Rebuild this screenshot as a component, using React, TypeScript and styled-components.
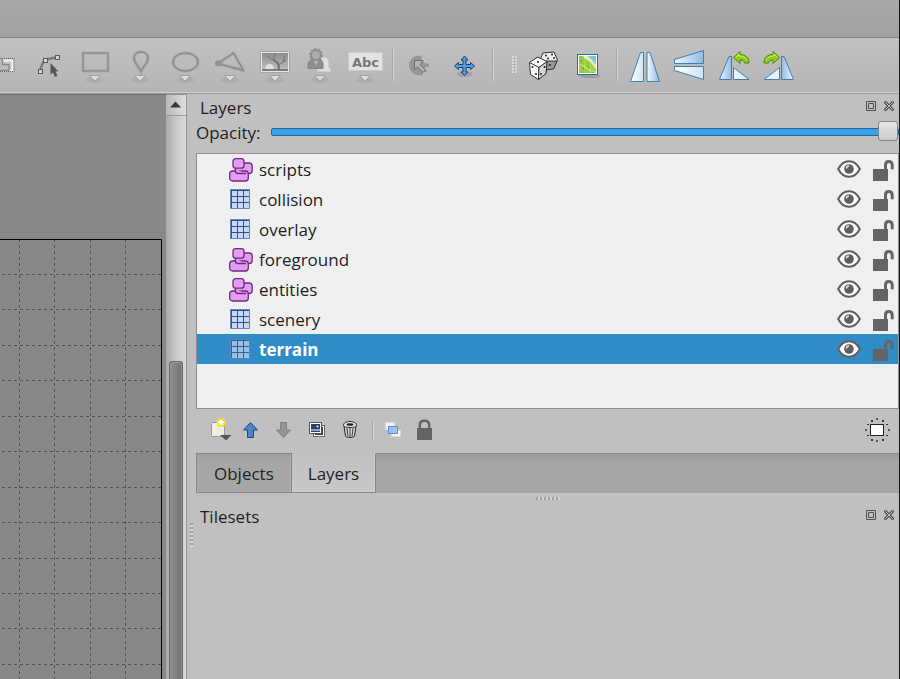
import React, { useState } from "react";
import styled, { createGlobalStyle, css } from "styled-components";

const GlobalStyle = createGlobalStyle`
  * { box-sizing: border-box; }
  body {
    margin: 0;
    background: #c0c0c0;
    color: #1e1e1e;
    font: 17px/24px "Open Sans", "Noto Sans", sans-serif;
  }
  button { font: inherit; color: inherit; }
`;

/* ---------- window frame ---------- */

const Window = styled.div`
  display: flex;
  flex-direction: column;
  height: 100vh;
  overflow: hidden;
  border-right: 1px solid #16181a;
`;

const MenuArea = styled.header`
  flex: none;
  height: 38px;
  background: linear-gradient(#a8a8a8, #a2a2a2);
  border-bottom: 1px solid #868686;
`;

const MainToolbar = styled.div`
  flex: none;
  display: flex;
  height: 56px;
  padding-bottom: 1px;
  background: linear-gradient(#c1c1c1, #b5b5b5);
  border-bottom: 1px solid #989898;
  box-shadow: inset 0 -1px #cfcfcf;
`;

const ToolButton = styled.button<{ $clipped?: boolean }>`
  flex: none;
  width: 45px;
  height: 54px;
  padding: 0;
  border: 0;
  background: none;
  margin-left: ${(p) => (p.$clipped ? "-18px" : "0")};
  svg { display: block; }
`;

const Separator = styled.span<{ $small?: boolean }>`
  flex: none;
  align-self: center;
  width: 10px;
  height: ${(p) => (p.$small ? "20px" : "32px")};
  background: linear-gradient(90deg, #a6a6a6 50%, #d6d6d6 50%) 5px 0 / 2px 100% no-repeat;
`;

const Workspace = styled.main`
  flex: 1;
  min-height: 0;
  display: flex;
`;

/* ---------- map canvas ---------- */

const MapCanvas = styled.section`
  flex: 166 1 0;
  min-width: 0;
  display: flex;
  justify-content: flex-end;
  overflow: hidden;
  background: #888;
  border-top: 1px solid #707070;
`;

const MapDrawing = styled.svg`
  flex: none;
  width: 166px;
`;

const ScrollBar = styled.div`
  flex: none;
  width: 21px;
  display: flex;
  flex-direction: column;
  border-top: 1px solid #8e8e8e;
  border-right: 1px solid #969696;
  background: linear-gradient(90deg, #a9a9a9, #c9c9c9 50%, #dadada);
`;

const ScrollArrow = styled.button`
  flex: none;
  height: 21px;
  padding: 0;
  border: 0;
  border-bottom: 1px solid #9a9a9a;
  background: linear-gradient(90deg, #b8b8b8, #dedede);
  svg { display: block; }
`;

const ScrollTrack = styled.div`
  flex: 1;
  display: flex;
  padding: 245px 3px 0;
`;

const ScrollThumb = styled.div`
  flex: 1;
  border: 1px solid #6c6c6c;
  border-bottom: 0;
  border-radius: 3px 3px 0 0;
  background: linear-gradient(90deg, #8e8e8e, #747474);
  box-shadow: inset 1px 1px #949494, inset -1px 0 #8c8c8c;
`;

/* ---------- docks ---------- */

const DockColumn = styled.aside`
  flex: 712 1 0;
  min-width: 0;
  display: flex;
  background: #c0c0c0;
`;

const SideSplitter = styled.div`
  flex: none;
  width: 9px;
  display: flex;
  align-items: flex-end;
  padding: 0 0 132px 3px;
`;

const SideGrip = styled.span`
  width: 3px;
  height: 24px;
  background: linear-gradient(#a0a0a0 50%, #d4d4d4 50%) 0 0 / 3px 4px;
`;

const Docks = styled.div`
  flex: 1;
  min-width: 0;
  display: flex;
  flex-direction: column;
`;

const TitleBar = styled.div<{ $spaced?: boolean }>`
  display: flex;
  align-items: center;
  justify-content: space-between;
  height: 24px;
  margin-top: ${(p) => (p.$spaced ? "4px" : "2px")};
  padding: 0 4px;
`;

const Title = styled.h2`
  margin: 0;
  font-size: 17px;
  font-weight: 400;
`;

const TitleButtons = styled.div`
  display: flex;
  gap: 6px;
  padding-bottom: 4px;
`;

const TitleButton = styled.button`
  width: 12px;
  height: 12px;
  padding: 0;
  border: 0;
  background: none;
  svg { display: block; }
`;

const OpacityRow = styled.div`
  display: flex;
  align-items: center;
  gap: 10px;
  height: 26px;
`;

const OpacitySlider = styled.input`
  appearance: none;
  flex: 1;
  min-width: 0;
  height: 20px;
  margin: 0 0 2px;
  background: none;
  &::-webkit-slider-runnable-track {
    height: 8px;
    border: 1px solid #21699f;
    border-radius: 2px;
    background: linear-gradient(#3d9ee2, #36a5f0);
  }
  &::-webkit-slider-thumb {
    appearance: none;
    width: 20px;
    height: 20px;
    margin-top: -8px;
    border: 1px solid #858585;
    border-radius: 3px;
    background: linear-gradient(#e6e6e6, #cacaca);
  }
`;

const LayerList = styled.ul`
  list-style: none;
  height: 256px;
  margin: 7px 0 0;
  padding: 0;
  border: 1px solid #8f8f8f;
  background: #efefef;
  overflow: hidden;
`;

const LayerRow = styled.li<{ $selected: boolean }>`
  display: flex;
  align-items: center;
  height: 30px;
  padding: 0 4px 0 32px;
  ${(p) =>
    p.$selected &&
    css`
      background: #308cc6;
      color: #fff;
      font-weight: 700;
    `}
`;

const LayerName = styled.button`
  flex: 1;
  display: flex;
  align-items: center;
  gap: 6px;
  height: 30px;
  padding: 2px 0 0;
  border: 0;
  background: none;
  text-align: left;
`;

const RowToggle = styled.button`
  flex: none;
  padding: 0;
  height: 30px;
  border: 0;
  background: none;
  margin-left: 8px;
  svg { display: block; }
`;

const LayerActions = styled.div`
  display: flex;
  height: 44px;
  padding: 0 6px;
`;

const ActionButton = styled.button`
  flex: none;
  width: 33px;
  height: 42px;
  padding: 0;
  border: 0;
  background: none;
  svg { display: block; }
`;

const Spacer = styled.span`
  flex: 1;
`;

const TabBar = styled.div`
  display: flex;
  height: 40px;
  background: linear-gradient(#8b8b8b 1px, #9a9a9a 1px, #a5a5a5 10px);
`;

const Tab = styled.button<{ $active: boolean }>`
  padding: 2px ${(p) => (p.$active ? "16px" : "17px")} 0;
  border: 1px solid #868686;
  border-left-width: ${(p) => (p.$active ? "0" : "1px")};
  border-top-color: ${(p) => (p.$active ? "#c0c0c0" : "#868686")};
  background: ${(p) => (p.$active ? "linear-gradient(#c0c0c0, #c8c8c8)" : "linear-gradient(#9f9f9f, #a6a6a6 10px)")};
  box-shadow: inset -1px -1px ${(p) => (p.$active ? "#d0d0d0" : "#adadad")};
`;

const Splitter = styled.div`
  display: flex;
  justify-content: center;
  height: 8px;
  padding-top: 4px;
`;

const SplitterGrip = styled.span`
  width: 24px;
  height: 3px;
  background: linear-gradient(90deg, #a0a0a0 50%, #d4d4d4 50%) 0 0 / 4px 3px;
`;

const ToolbarGrip = styled.span`
  flex: none;
  align-self: center;
  width: 24px;
  height: 18px;
  background: radial-gradient(circle at 1px 1px, #dadada 1px, #a8a8a8 2px) 15px 0 / 3px 3px;
  background-clip: content-box;
  padding: 0 4px 0 15px;
`;

/* ---------- drawings ---------- */

const Tool = ({ label, clipped, menu, children }: { label: string; clipped?: boolean; menu?: boolean; children: React.ReactNode }) => (
  <ToolButton type="button" aria-label={label} $clipped={clipped}>
    <svg width="45" height="54" viewBox="0 0 45 54" fill="none">
      {children}
      {menu && (
        <>
          <ellipse cx="23" cy="42" rx="9" ry="3" fill="#888" opacity=".25" />
          <path d="M17.5 37.5h11L23 43z" fill="#dcdcdc" stroke="#a2a2a2" />
        </>
      )}
    </svg>
  </ToolButton>
);

const Action = ({ label, children }: { label: string; children: React.ReactNode }) => (
  <ActionButton type="button" aria-label={label}>
    <svg width="33" height="42" viewBox="0 0 33 42" fill="none">
      {children}
    </svg>
  </ActionButton>
);

const BlueGradient = () => (
  <defs>
    <linearGradient id="paleLeft" x1="0" x2="1">
      <stop offset="0" stopColor="#fff" />
      <stop offset="1" stopColor="#cfe4f3" />
    </linearGradient>
    <linearGradient id="paleRight" x1="0" x2="1">
      <stop offset="0" stopColor="#f2f8fc" />
      <stop offset="1" stopColor="#8dbbe2" />
    </linearGradient>
  </defs>
);

const RotateDrawing = () => (
  <>
    <path d="M8.5 41.500 18 18.500h2.500v23z" fill="url(#paleRight)" stroke="#3f7eb5" />
    <path d="M22.500 29.500 38 41.500H22.500z" fill="#e6f1f9" stroke="#3f7eb5" />
    <path
      d="M22.500 19.500 29 13.500v3c5.500 0 9 3 9 8.500h-4.500c-.3-2-1.600-3-4.500-3v3.500z"
      fill="#8fcc1c"
      stroke="#4c8a09"
    />
    <path d="M24.500 19.500 28 16v2c4 .2 6.500 1.500 8 4" stroke="#c9f06a" />
  </>
);

const TileLayerIcon = ({ faded }: { faded: boolean }) => (
  <svg width="24" height="24" viewBox="0 0 24 24" opacity={faded ? 0.7 : 1}>
    <rect x="2" y="2" width="19" height="19" fill="#32508c" />
    <rect x="1.500" y="1.500" width="19" height="19" fill="none" stroke="#6f86b4" />
    {[3, 9, 15].map((y) => [3, 9, 15].map((x) => <rect key={`${x}-${y}`} x={x} y={y} width="5" height="5" fill="#c4d7f8" />))}
  </svg>
);

const ObjectLayerIcon = () => (
  <svg width="24" height="24" viewBox="0 0 24 24" fill="#e49df3" stroke="#6d2a80" strokeWidth="1.300">
    <rect x="6.500" y="5" width="16.700" height="10.500" rx="3" />
    <rect x=".7" y="13" width="18.600" height="10" rx="3" />
    <path d="M6.500 11v2.500c0 1.500 1 2 3 2H17" fill="#e49df3" />
    <rect x="4" y=".7" width="11" height="9.500" rx="2.800" />
  </svg>
);

const EyeIcon = () => (
  <svg width="24" height="30" viewBox="0 0 24 30">
    <path d="M1.200 15C4 9.500 8 7.200 12 7.200S20 9.500 22.800 15C20 20.500 16 22.800 12 22.800S4 20.500 1.200 15z" fill="#fafafa" stroke="#5e5e5e" strokeWidth="2" />
    <circle cx="12" cy="15" r="4.800" fill="#5e5e5e" />
    <path d="M9.500 14.500a2.500 2.500 0 0 1 2.500-2.500" fill="none" stroke="#e8e8e8" strokeWidth="1.300" />
  </svg>
);

const UnlockedIcon = () => (
  <svg width="25" height="30" viewBox="0 0 25 30">
    <path d="M4 15h15v12H4z" fill="#646464" />
    <path d="M16.500 16v-5c0-2.700 1-3.500 3.200-3.500s3.500 1.200 3.500 3.800v4" fill="none" stroke="#646464" strokeWidth="3" />
  </svg>
);

const DockButtons = ({ name }: { name: string }) => (
  <TitleButtons>
    <TitleButton type="button" aria-label={`Float ${name}`}>
      <svg width="12" height="12" fill="none" stroke="#505050">
        <path d="M1.500 1.500h9v9h-9zM3.500 3.500h5v5h-5z" />
      </svg>
    </TitleButton>
    <TitleButton type="button" aria-label={`Close ${name}`}>
      <svg width="12" height="12" fill="none" strokeLinecap="round">
        <path d="M2.500 2.500l7 7m0-7l-7 7" stroke="#505050" strokeWidth="3" />
        <path d="M2.500 2.500l7 7m0-7l-7 7" stroke="#c0c0c0" strokeWidth="1" />
      </svg>
    </TitleButton>
  </TitleButtons>
);

const TILE = 35.45;
const MAP_TOP = 144;
const MAP_RIGHT = 161;

const MapGrid = () => (
  <MapDrawing aria-label="Map">
    <g stroke="#535353" strokeDasharray="3 3">
      {[1, 2, 3, 4].map((i) => {
        const x = Math.floor(MAP_RIGHT - i * TILE) + 0.5;
        return <line key={i} x1={x} x2={x} y1={MAP_TOP} y2="3000" />;
      })}
      {Array.from({ length: 60 }, (_, i) => {
        const y = Math.floor(MAP_TOP + (i + 1) * TILE) + 0.5;
        return <line key={i} x1="-4" x2={MAP_RIGHT} y1={y} y2={y} />;
      })}
    </g>
    <path d={`M0 ${MAP_TOP + 0.5}h${MAP_RIGHT + 0.5}V3000`} fill="none" stroke="#000" />
  </MapDrawing>
);

/* ---------- data ---------- */

type Layer = { name: string; kind: "object" | "tile" };

const layers: Layer[] = [
  { name: "scripts", kind: "object" },
  { name: "collision", kind: "tile" },
  { name: "overlay", kind: "tile" },
  { name: "foreground", kind: "object" },
  { name: "entities", kind: "object" },
  { name: "scenery", kind: "tile" },
  { name: "terrain", kind: "tile" },
];

const Toolbar = () => (
  <MainToolbar role="toolbar" aria-label="Tools">
    <Tool label="Select objects" clipped>
      <rect x="4" y="21" width="28" height="13" fill="#c8c8c8" />
      <rect x="4" y="22.500" width="26.500" height="10" stroke="#f4f4f4" strokeWidth="2" />
      <rect x="4" y="20.500" width="28" height="13" stroke="#555" strokeDasharray="1 1" />
      <path d="M10 20.500h10.500v6H27v6H10zM10 28h7v-2" fill="#bdbdbd" stroke="#8b8b8b" strokeWidth="1.500" strokeLinejoin="round" />
    </Tool>
    <Tool label="Edit polygons">
      <path d="M13.500 33c.8-6 2-9 5-11 3-1.500 7-1.500 12-3" stroke="#8d8d8d" strokeWidth="3" />
      <path d="M13.500 33c.8-6 2-9 5-11 3-1.500 7-1.500 12-3" stroke="#6c6c6c" />
      <g fill="#d6d6d6" stroke="#595959">
        <rect x="11.500" y="31.500" width="4" height="4" />
        <rect x="16.500" y="20.500" width="4" height="4" />
        <rect x="28.500" y="17.500" width="4" height="4" />
      </g>
      <path d="M23.500 25v11.500l2.500-2 2 4.500 2.500-1.200-2-4.300h3z" fill="#555" />
    </Tool>
    <Tool label="Insert rectangle" menu>
      <rect x="11" y="15" width="25" height="18" stroke="#a8a8a8" strokeWidth="3" />
      <rect x="11" y="15" width="25" height="18" stroke="#858585" />
    </Tool>
    <Tool label="Insert point" menu>
      <path d="M24 33.500c-1.500-4-7-8.500-7-13.500 0-4 3-6 7-6s7 2 7 6c0 5-5.500 9.500-7 13.500z" stroke="#a2a2a2" strokeWidth="3" />
      <path d="M24 33.500c-1.500-4-7-8.500-7-13.500 0-4 3-6 7-6s7 2 7 6c0 5-5.500 9.500-7 13.500z" stroke="#858585" />
    </Tool>
    <Tool label="Insert ellipse" menu>
      <ellipse cx="23.500" cy="24" rx="12.500" ry="9" stroke="#a4a4a4" strokeWidth="3" />
      <ellipse cx="23.500" cy="24" rx="12.500" ry="9" stroke="#838383" />
    </Tool>
    <Tool label="Insert polygon" menu>
      <path d="M11 25.500 26.500 15 36.500 32.500z" stroke="#a4a4a4" strokeWidth="3" strokeLinejoin="round" />
      <path d="M11 25.500 26.500 15 36.500 32.500z" stroke="#838383" strokeLinejoin="round" />
      <circle cx="11" cy="25.500" r="3" fill="#929292" />
    </Tool>
    <Tool label="Insert tile" menu>
      <defs>
        <linearGradient id="sky" x1="0" x2="0" y1="0" y2="1">
          <stop offset="0" stopColor="#8c8c8c" />
          <stop offset="1" stopColor="#c2c2c2" />
        </linearGradient>
      </defs>
      <rect x="8.500" y="13.500" width="29" height="21" rx="1" fill="#e6e6e6" stroke="#a4a4a4" />
      <rect x="10" y="15" width="26" height="18" fill="url(#sky)" />
      <circle cx="17.500" cy="30" r="4" fill="#e0e0e0" />
      <path d="M10 31h26v2H10z" fill="#7b7b7b" />
      <path d="M27 31.500c-.6-3 0-5-1.300-6.500l-4.400-3.500" stroke="#6a6a6a" strokeWidth="2" />
      <path d="m15.500 17.500 2.500 3 3.500 1 4 3.500M21.500 21l1.500-5M26.500 27l4.500-3 2-6M31 23.500l3-1" stroke="#707070" />
    </Tool>
    <Tool label="Insert template" menu>
      <path d="M23 21.500c2-3 7-2 8 0l.5 7 2.500 5H20z" fill="#e0e0e0" stroke="#cfcfcf" />
      <path d="M11 30.500V25l3-3.500h10l2 3.500v5.500z" fill="#8e8e8e" stroke="#858585" />
      <circle cx="19" cy="17" r="5" fill="#acacac" stroke="#8d8d8d" strokeWidth="2" />
      <circle cx="19" cy="17" r="6.500" stroke="#8d8d8d" strokeDasharray="2 2" />
      <path d="m17 23 2 5 2-5" fill="#b6b6b6" />
    </Tool>
    <Tool label="Insert text" menu>
      <rect x="6.500" y="14.500" width="34" height="18" rx="1" fill="#e3e3e3" stroke="#c9c9c9" />
      <text x="23.500" y="29" textAnchor="middle" fontFamily="DejaVu Sans" fontWeight="700" fontSize="13" fill="#777">
        Abc
      </text>
    </Tool>
    <Separator />
    <Tool label="World tool">
      <circle cx="22" cy="27.500" r="10" fill="#969696" />
      <path d="M24 18c4 1 7 4 8 8l-4-1-3-3zM28 29h4l-1 4-3-1zM26 34l4 0-4 3z" fill="#c0c0c0" />
      <path d="M17.500 22.500v9l3-2.500 5.500 5.500 2.500-2.500-5.500-5.500 3-4z" fill="#b4b4b4" stroke="#707070" />
    </Tool>
    <Tool label="Layer offset">
      <ellipse cx="22.500" cy="36" rx="8" ry="3" fill="#777" opacity=".35" />
      <path
        d="m22.500 18 3.500 4h-2v4.500h4.500v-2l4 3.500-4 3.500v-2H24V34h2l-3.500 3.500L19 34h2v-4.500h-4.500v2l-4-3.500 4-3.500v2H21V22h-2z"
        fill="#5f9be0"
        stroke="#173f7d"
      />
    </Tool>
    <Separator />
    <ToolbarGrip />
    <Tool label="Random mode">
      <g stroke="#303030" strokeLinejoin="round">
        <path d="m22 15 11-1 3.500 8-4 8-11 1-3-8z" fill="#f0f0f0" />
        <path d="M25 23h11l-3.500 8-9 1z" fill="#9a9a9a" />
        <path d="m8.500 24.500 8-5.500 9.500 4.500-1 12-7.500 6-8-5z" fill="#fff" />
        <path d="m8.500 24.500 9.500 5 8-6M18 29.500l-.5 12" />
        <path d="m18 29.500 8-6-1 12-7.500 6z" fill="#d8d8d8" />
      </g>
      <g fill="#222">
        <circle cx="17" cy="24" r="1" />
        <circle cx="11.500" cy="29" r="1" />
        <circle cx="15" cy="36" r="1" />
        <circle cx="20" cy="36" r="1" />
        <circle cx="23.500" cy="29" r="1" />
        <circle cx="25" cy="17.500" r="1" />
        <circle cx="31" cy="16.500" r="1" />
        <circle cx="27" cy="20.500" r="1" />
        <circle cx="33" cy="20" r="1" />
        <circle cx="29" cy="27" r="1" />
      </g>
    </Tool>
    <Tool label="Terrain fill">
      <ellipse cx="24" cy="38" rx="11" ry="2" fill="#777" opacity=".4" />
      <rect x="11.500" y="16.500" width="20" height="20" fill="#fff" stroke="#1473a8" />
      <path d="M13 18h17v17H13z" fill="#92cf3a" />
      <path d="M17 18h13v13c-3-3-4-5-6-7s-5-2-7-6z" fill="#f1e8ac" />
      <path d="M22 18h8v8c-3-1-3-4-5-5s-2-2-3-3z" fill="#74c5ef" />
      <path d="M13 27c4-1 6 2 10 5l7 2" stroke="#b7dd62" strokeWidth="2" />
      <path d="M15 22l1 2m0 5 2 2m3-3 2 2" stroke="#c6442d" />
      <path d="M18.500 18v17M24.500 18v17M13 23.500h17M13 29.500h17" stroke="#fff" opacity=".15" />
    </Tool>
    <Separator />
    <Tool label="Flip horizontally">
      <BlueGradient />
      <path d="M9.500 43.500 19.500 14.500h3v29z" fill="url(#paleLeft)" stroke="#3f7eb5" />
      <path d="M26 14.500h3l9.500 29H26z" fill="url(#paleRight)" stroke="#3f7eb5" />
    </Tool>
    <Tool label="Flip vertically">
      <path d="M8.500 21.500 37.500 12.500v13h-29z" fill="url(#paleRight)" stroke="#3f7eb5" />
      <path d="M8.500 28.500h29v13l-29-9z" fill="url(#paleLeft)" stroke="#3f7eb5" />
    </Tool>
    <Tool label="Rotate left">
      <RotateDrawing />
    </Tool>
    <Tool label="Rotate right">
      <g transform="translate(46 0) scale(-1 1)">
        <RotateDrawing />
      </g>
    </Tool>
  </MainToolbar>
);

const LayerToolbar = () => (
  <LayerActions role="toolbar" aria-label="Layer actions">
    <Action label="New layer">
      <rect x="9.500" y="13.500" width="13" height="14" rx="1" fill="#eeeee4" stroke="#999" />
      <circle cx="19" cy="13.500" r="4.500" fill="#fbe94a" opacity=".8" />
      <path d="m19 8.500 1.500 3 3.500.3-2.500 2.400.8 3.300-3.300-1.700-3 1.700.6-3.300-2.600-2.400 3.500-.3z" fill="#fff" stroke="#eed307" />
      <path d="M18 26h11.500l-5.500 5.500z" fill="#555" />
    </Action>
    <Action label="Raise layer">
      <path d="m15.500 13.500 7 7.500h-4v7.500h-6V21h-4z" fill="#4a83c8" stroke="#1f4a87" strokeLinejoin="round" />
    </Action>
    <Action label="Lower layer">
      <path d="m15.500 28.500 7-7.500h-4v-7.500h-6V21h-4z" fill="#949494" stroke="#808080" strokeLinejoin="round" />
    </Action>
    <Action label="Duplicate layer">
      <rect x="12.500" y="16.500" width="11" height="11" fill="#fff" stroke="#666" />
      <rect x="14" y="18" width="8" height="8" fill="#303b4d" />
      <rect x="8.500" y="13.500" width="12" height="11" fill="#fff" stroke="#555" />
      <rect x="10" y="15" width="9" height="8" fill="#2d4166" />
      <path d="M10 20h9v2h-9z" fill="#8ba5ce" />
      <circle cx="16.500" cy="17.500" r="1" fill="#fff" />
    </Action>
    <Action label="Remove layer">
      <path d="m10 17 1.500 10c1 2 8 2 9 0L22 17z" fill="#d2d2cc" stroke="#252525" />
      <path d="M13 19l1 8.500M16 19v9M19 19l-1 8.500" stroke="#444" />
      <path d="M9.500 16c0-2 3-3.500 6.500-3.500s6.500 1.500 6.500 3.500-3 2.500-6.500 2.500-6.500-.5-6.500-2.500z" fill="#e4e4e0" stroke="#252525" />
      <ellipse cx="16" cy="15.500" rx="3.500" ry="1.300" fill="#222" />
    </Action>
    <Separator $small />
    <Action label="Highlight current layer">
      <rect x="8.500" y="13.500" width="9" height="7" fill="#f2f2f2" stroke="#dadada" />
      <rect x="14.500" y="21.500" width="9" height="6" fill="#f8f8f8" stroke="#dadada" />
      <rect x="11.500" y="17.500" width="9" height="7" fill="#9fc0f5" stroke="#5c8de0" />
    </Action>
    <Action label="Lock other layers">
      <path d="M7 19h15v12H7z" fill="#646464" />
      <path d="M9.800 20v-4c0-2.700 1.700-4.300 4.700-4.300s4.700 1.600 4.700 4.300v4" stroke="#646464" strokeWidth="2.500" />
    </Action>
    <Spacer />
    <Action label="Show selection">
      <rect x="10.500" y="15.500" width="13" height="11" fill="#fff" stroke="#222" />
      <path d="M16 9h2v2h-2zM16 31h2v2h-2zM5 20h2v2H5zM28 20h2v2h-2z" fill="#555" />
      <path d="M11 11h2v2h-2zM22 11h2v2h-2zM11 30h2v2h-2zM22 30h2v2h-2zM7 15h2v1H7zM26 15h2v1h-2zM7 26h2v1H7zM26 26h2v1h-2z" fill="#333" />
    </Action>
  </LayerActions>
);

export default function App() {
  const [selected, setSelected] = useState("terrain");
  const [opacity, setOpacity] = useState(100);
  const [tab, setTab] = useState("Layers");

  return (
    <>
      <GlobalStyle />
      <Window>
        <MenuArea />
        <Toolbar />
        <Workspace>
          <MapCanvas>
            <MapGrid />
          </MapCanvas>
          <ScrollBar>
            <ScrollArrow type="button" aria-label="Scroll up">
              <svg width="20" height="20">
                <path d="M4 12.500h11L9.500 6.500z" fill="#3a3a3a" />
              </svg>
            </ScrollArrow>
            <ScrollTrack>
              <ScrollThumb />
            </ScrollTrack>
          </ScrollBar>
          <DockColumn>
            <SideSplitter>
              <SideGrip />
            </SideSplitter>
            <Docks>
              <TitleBar>
                <Title>Layers</Title>
                <DockButtons name="Layers" />
              </TitleBar>
              <OpacityRow>
                <label htmlFor="opacity">Opacity:</label>
                <OpacitySlider
                  id="opacity"
                  type="range"
                  min="0"
                  max="100"
                  value={opacity}
                  onChange={(e) => setOpacity(Number(e.target.value))}
                />
              </OpacityRow>
              <LayerList>
                {layers.map((layer) => (
                  <LayerRow key={layer.name} $selected={layer.name === selected}>
                    <LayerName type="button" aria-pressed={layer.name === selected} onClick={() => setSelected(layer.name)}>
                      {layer.kind === "tile" ? <TileLayerIcon faded={layer.name === selected} /> : <ObjectLayerIcon />}
                      {layer.name}
                    </LayerName>
                    <RowToggle type="button" aria-label={`Toggle visibility of ${layer.name}`}>
                      <EyeIcon />
                    </RowToggle>
                    <RowToggle type="button" aria-label={`Lock ${layer.name}`}>
                      <UnlockedIcon />
                    </RowToggle>
                  </LayerRow>
                ))}
              </LayerList>
              <LayerToolbar />
              <TabBar role="tablist">
                {["Objects", "Layers"].map((name) => (
                  <Tab key={name} type="button" role="tab" aria-selected={tab === name} $active={tab === name} onClick={() => setTab(name)}>
                    {name}
                  </Tab>
                ))}
              </TabBar>
              <Splitter>
                <SplitterGrip />
              </Splitter>
              <TitleBar $spaced>
                <Title>Tilesets</Title>
                <DockButtons name="Tilesets" />
              </TitleBar>
            </Docks>
          </DockColumn>
        </Workspace>
      </Window>
    </>
  );
}
